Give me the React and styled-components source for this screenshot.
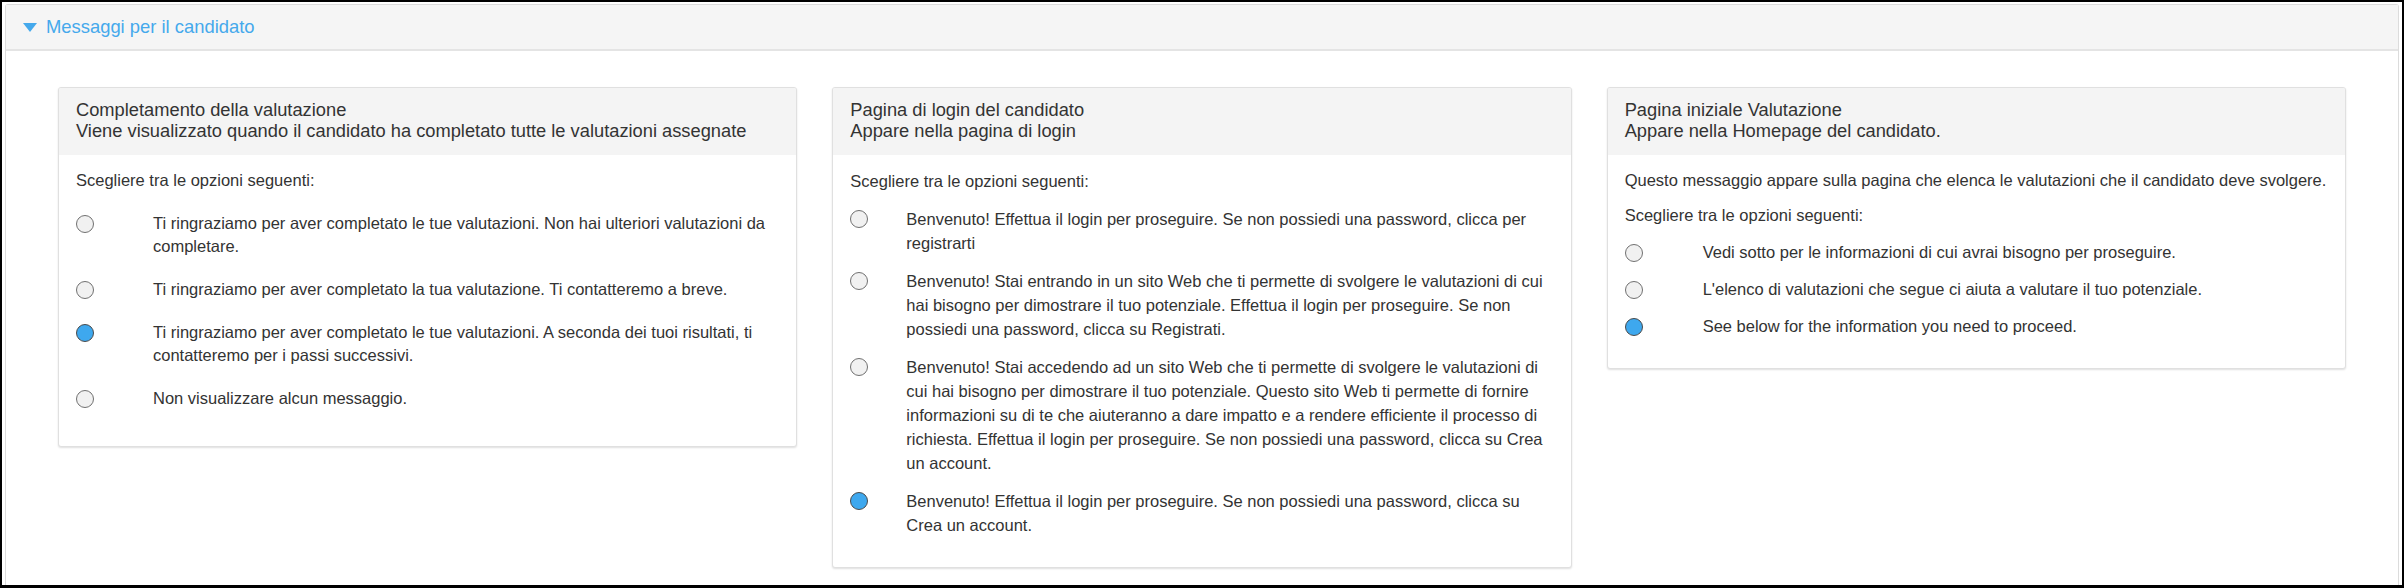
import React from "react";
import styled, { createGlobalStyle } from "styled-components";

const GlobalStyle = createGlobalStyle`
  html, body {
    margin: 0;
    padding: 0;
    background: #ffffff;
  }
  body {
    font-family: "Liberation Sans", Arial, sans-serif;
    color: #333333;
  }
  * { box-sizing: border-box; }
`;

const Frame = styled.div`
  width: 2404px;
  height: 588px;
  border: 2px solid #000000;
  border-bottom-width: 3px;
  display: flex;
  flex-direction: column;
  overflow: hidden;
  background: #ffffff;
`;

const Panel = styled.section`
  flex: 1;
  margin: 2px 3px 0 3px;
  border: 1px solid #dcdcdc;
  border-bottom: none;
  border-radius: 3px 3px 0 0;
  display: flex;
  flex-direction: column;
`;

const PanelHeader = styled.div`
  height: 46px;
  background: #f5f5f5;
  border-bottom: 2px solid #e4e4e4;
  display: flex;
  align-items: center;
  padding-left: 17px;
  gap: 9px;
  color: #45a9ec;
  font-size: 18.4px;
`;

const Caret = styled.svg`
  width: 14px;
  height: 9px;
  display: block;
`;

const Content = styled.div`
  padding: 36px 52px 20px 52px;
  display: grid;
  grid-template-columns: repeat(3, 1fr);
  gap: 35px;
  align-items: start;
`;

const Card = styled.div`
  border: 1px solid #e0e0e0;
  border-radius: 3px;
  background: #ffffff;
  box-shadow: 0 1px 2px rgba(0, 0, 0, 0.13);
  overflow: hidden;
`;

const CardHeader = styled.div`
  background: #f4f4f4;
  padding: 11px 17px 14px 17px;
  font-size: 18.3px;
  line-height: 21px;
  color: #333333;
`;

const CardBody = styled.div`
  padding: 14px 17px 16px 17px;
  font-size: 16.5px;
  line-height: ${(p) => p.$lineHeight}px;
  color: #333333;
`;

const Para = styled.p`
  margin: 0 0 12px 0;
`;

const Prompt = styled.p`
  margin: 0;
`;

const OptionList = styled.div`
  display: flex;
  flex-direction: column;
`;

const Option = styled.label`
  display: flex;
  align-items: flex-start;
  margin-top: ${(p) => p.$gap}px;
  margin-bottom: ${(p) => (p.$last ? p.$gap : 0)}px;
`;

const Radio = styled.span`
  flex: 0 0 auto;
  width: 18px;
  height: 18px;
  margin-top: 3px;
  border-radius: 50%;
  border: 1.5px solid ${(p) => (p.$checked ? "#4a4a4a" : "#707070")};
  background: ${(p) => (p.$checked ? "#3ea8ee" : "#f1f1f1")};
`;

const OptionText = styled.span`
  margin-left: ${(p) => p.$indent}px;
`;

const cards = [
  {
    title: "Completamento della valutazione",
    subtitle:
      "Viene visualizzato quando il candidato ha completato tutte le valutazioni assegnate",
    gap: 20,
    indent: 59,
    lineHeight: 23,
    options: [
      "Ti ringraziamo per aver completato le tue valutazioni. Non hai ulteriori valutazioni da completare.",
      "Ti ringraziamo per aver completato la tua valutazione. Ti contatteremo a breve.",
      "Ti ringraziamo per aver completato le tue valutazioni. A seconda dei tuoi risultati, ti contatteremo per i passi successivi.",
      "Non visualizzare alcun messaggio.",
    ],
    checked: 2,
  },
  {
    title: "Pagina di login del candidato",
    subtitle: "Appare nella pagina di login",
    gap: 14,
    indent: 38,
    lineHeight: 24,
    options: [
      "Benvenuto! Effettua il login per proseguire. Se non possiedi una password, clicca per registrarti",
      "Benvenuto! Stai entrando in un sito Web che ti permette di svolgere le valutazioni di cui hai bisogno per dimostrare il tuo potenziale. Effettua il login per proseguire. Se non possiedi una password, clicca su Registrati.",
      "Benvenuto! Stai accedendo ad un sito Web che ti permette di svolgere le valutazioni di cui hai bisogno per dimostrare il tuo potenziale. Questo sito Web ti permette di fornire informazioni su di te che aiuteranno a dare impatto e a rendere efficiente il processo di richiesta. Effettua il login per proseguire. Se non possiedi una password, clicca su Crea un account.",
      "Benvenuto! Effettua il login per proseguire. Se non possiedi una password, clicca su Crea un account.",
    ],
    checked: 3,
  },
  {
    title: "Pagina iniziale Valutazione",
    subtitle: "Appare nella Homepage del candidato.",
    description:
      "Questo messaggio appare sulla pagina che elenca le valutazioni che il candidato deve svolgere.",
    gap: 14,
    indent: 60,
    lineHeight: 23,
    options: [
      "Vedi sotto per le informazioni di cui avrai bisogno per proseguire.",
      "L'elenco di valutazioni che segue ci aiuta a valutare il tuo potenziale.",
      "See below for the information you need to proceed.",
    ],
    checked: 2,
  },
];

function MessageCard({ card }) {
  return (
    <Card>
      <CardHeader>
        <div>{card.title}</div>
        <div>{card.subtitle}</div>
      </CardHeader>
      <CardBody $lineHeight={card.lineHeight}>
        {card.description && <Para>{card.description}</Para>}
        <Prompt>Scegliere tra le opzioni seguenti:</Prompt>
        <OptionList>
          {card.options.map((text, i) => (
            <Option
              key={i}
              $gap={card.gap}
              $last={i === card.options.length - 1}
            >
              <Radio $checked={i === card.checked} />
              <OptionText $indent={card.indent}>{text}</OptionText>
            </Option>
          ))}
        </OptionList>
      </CardBody>
    </Card>
  );
}

export default function App() {
  return (
    <>
      <GlobalStyle />
      <Frame>
        <Panel>
          <PanelHeader>
            <Caret viewBox="0 0 14 9">
              <polygon points="0,0 14,0 7,9" fill="#45a9ec" />
            </Caret>
            <span>Messaggi per il candidato</span>
          </PanelHeader>
          <Content>
            {cards.map((c, i) => (
              <MessageCard key={i} card={c} />
            ))}
          </Content>
        </Panel>
      </Frame>
    </>
  );
}
